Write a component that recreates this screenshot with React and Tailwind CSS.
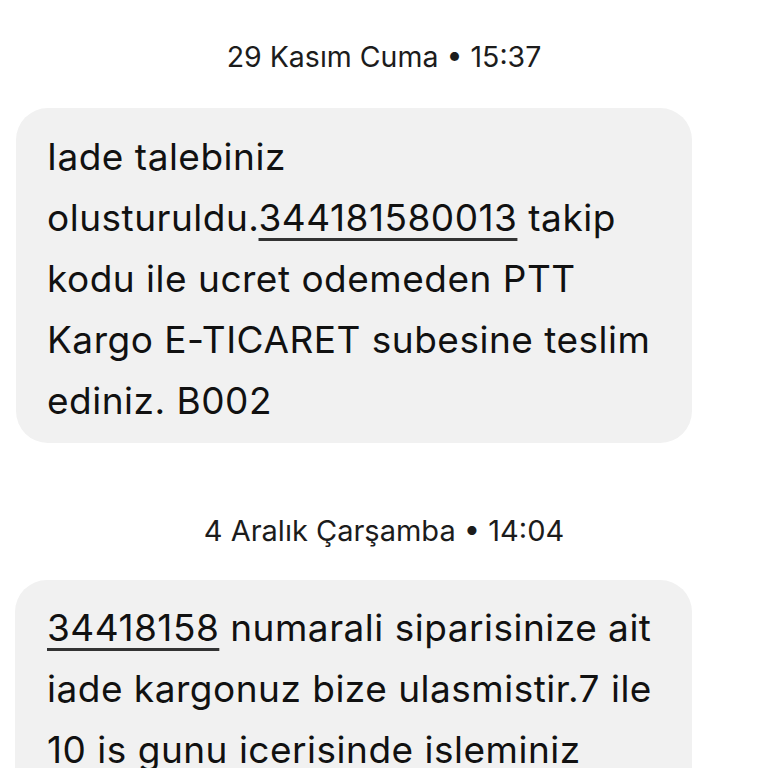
export default function App() {
  return (
    <div className="w-[768px] h-[768px] overflow-hidden bg-white flex flex-col" style={{ fontFamily: "Inter, Roboto, 'Noto Sans', sans-serif" }}>
      <div className="pt-[39px] h-[75px] leading-[36px] text-[28.5px] text-[#1c1c1c] text-center">
        29 Kasım Cuma • 15:37
      </div>
      <div className="mt-[33px] ml-[16px] w-[676px] bg-[#f1f1f1] rounded-[32px] pl-[31px] pr-[16px] pt-[18px] pb-[12px] text-[37px] leading-[61px] tracking-[0.5px] text-[#111]">
        <div>Iade talebiniz</div>
        <div>olusturuldu.<span className="underline decoration-[3px] decoration-[#333] underline-offset-[7px]">344181580013</span> takip</div>
        <div>kodu ile ucret odemeden PTT</div>
        <div>Kargo E-TICARET subesine teslim</div>
        <div>ediniz. B002</div>
      </div>
      <div className="mt-[70px] h-[36px] leading-[36px] text-[29px] text-[#1c1c1c] text-center">
        4 Aralık Çarşamba • 14:04
      </div>
      <div className="mt-[31px] ml-[15px] w-[677px] bg-[#f1f1f1] rounded-[32px] pl-[32px] pr-[16px] pt-[17px] pb-[12px] text-[37px] leading-[61px] tracking-[0.5px] text-[#111]">
        <div><span className="underline decoration-[3px] decoration-[#333] underline-offset-[7px]">34418158</span> numarali siparisinize ait</div>
        <div>iade kargonuz bize ulasmistir.7 ile</div>
        <div>10 is gunu icerisinde isleminiz</div>
        <div>tamamlanacaktir.</div>
      </div>
    </div>
  );
}
